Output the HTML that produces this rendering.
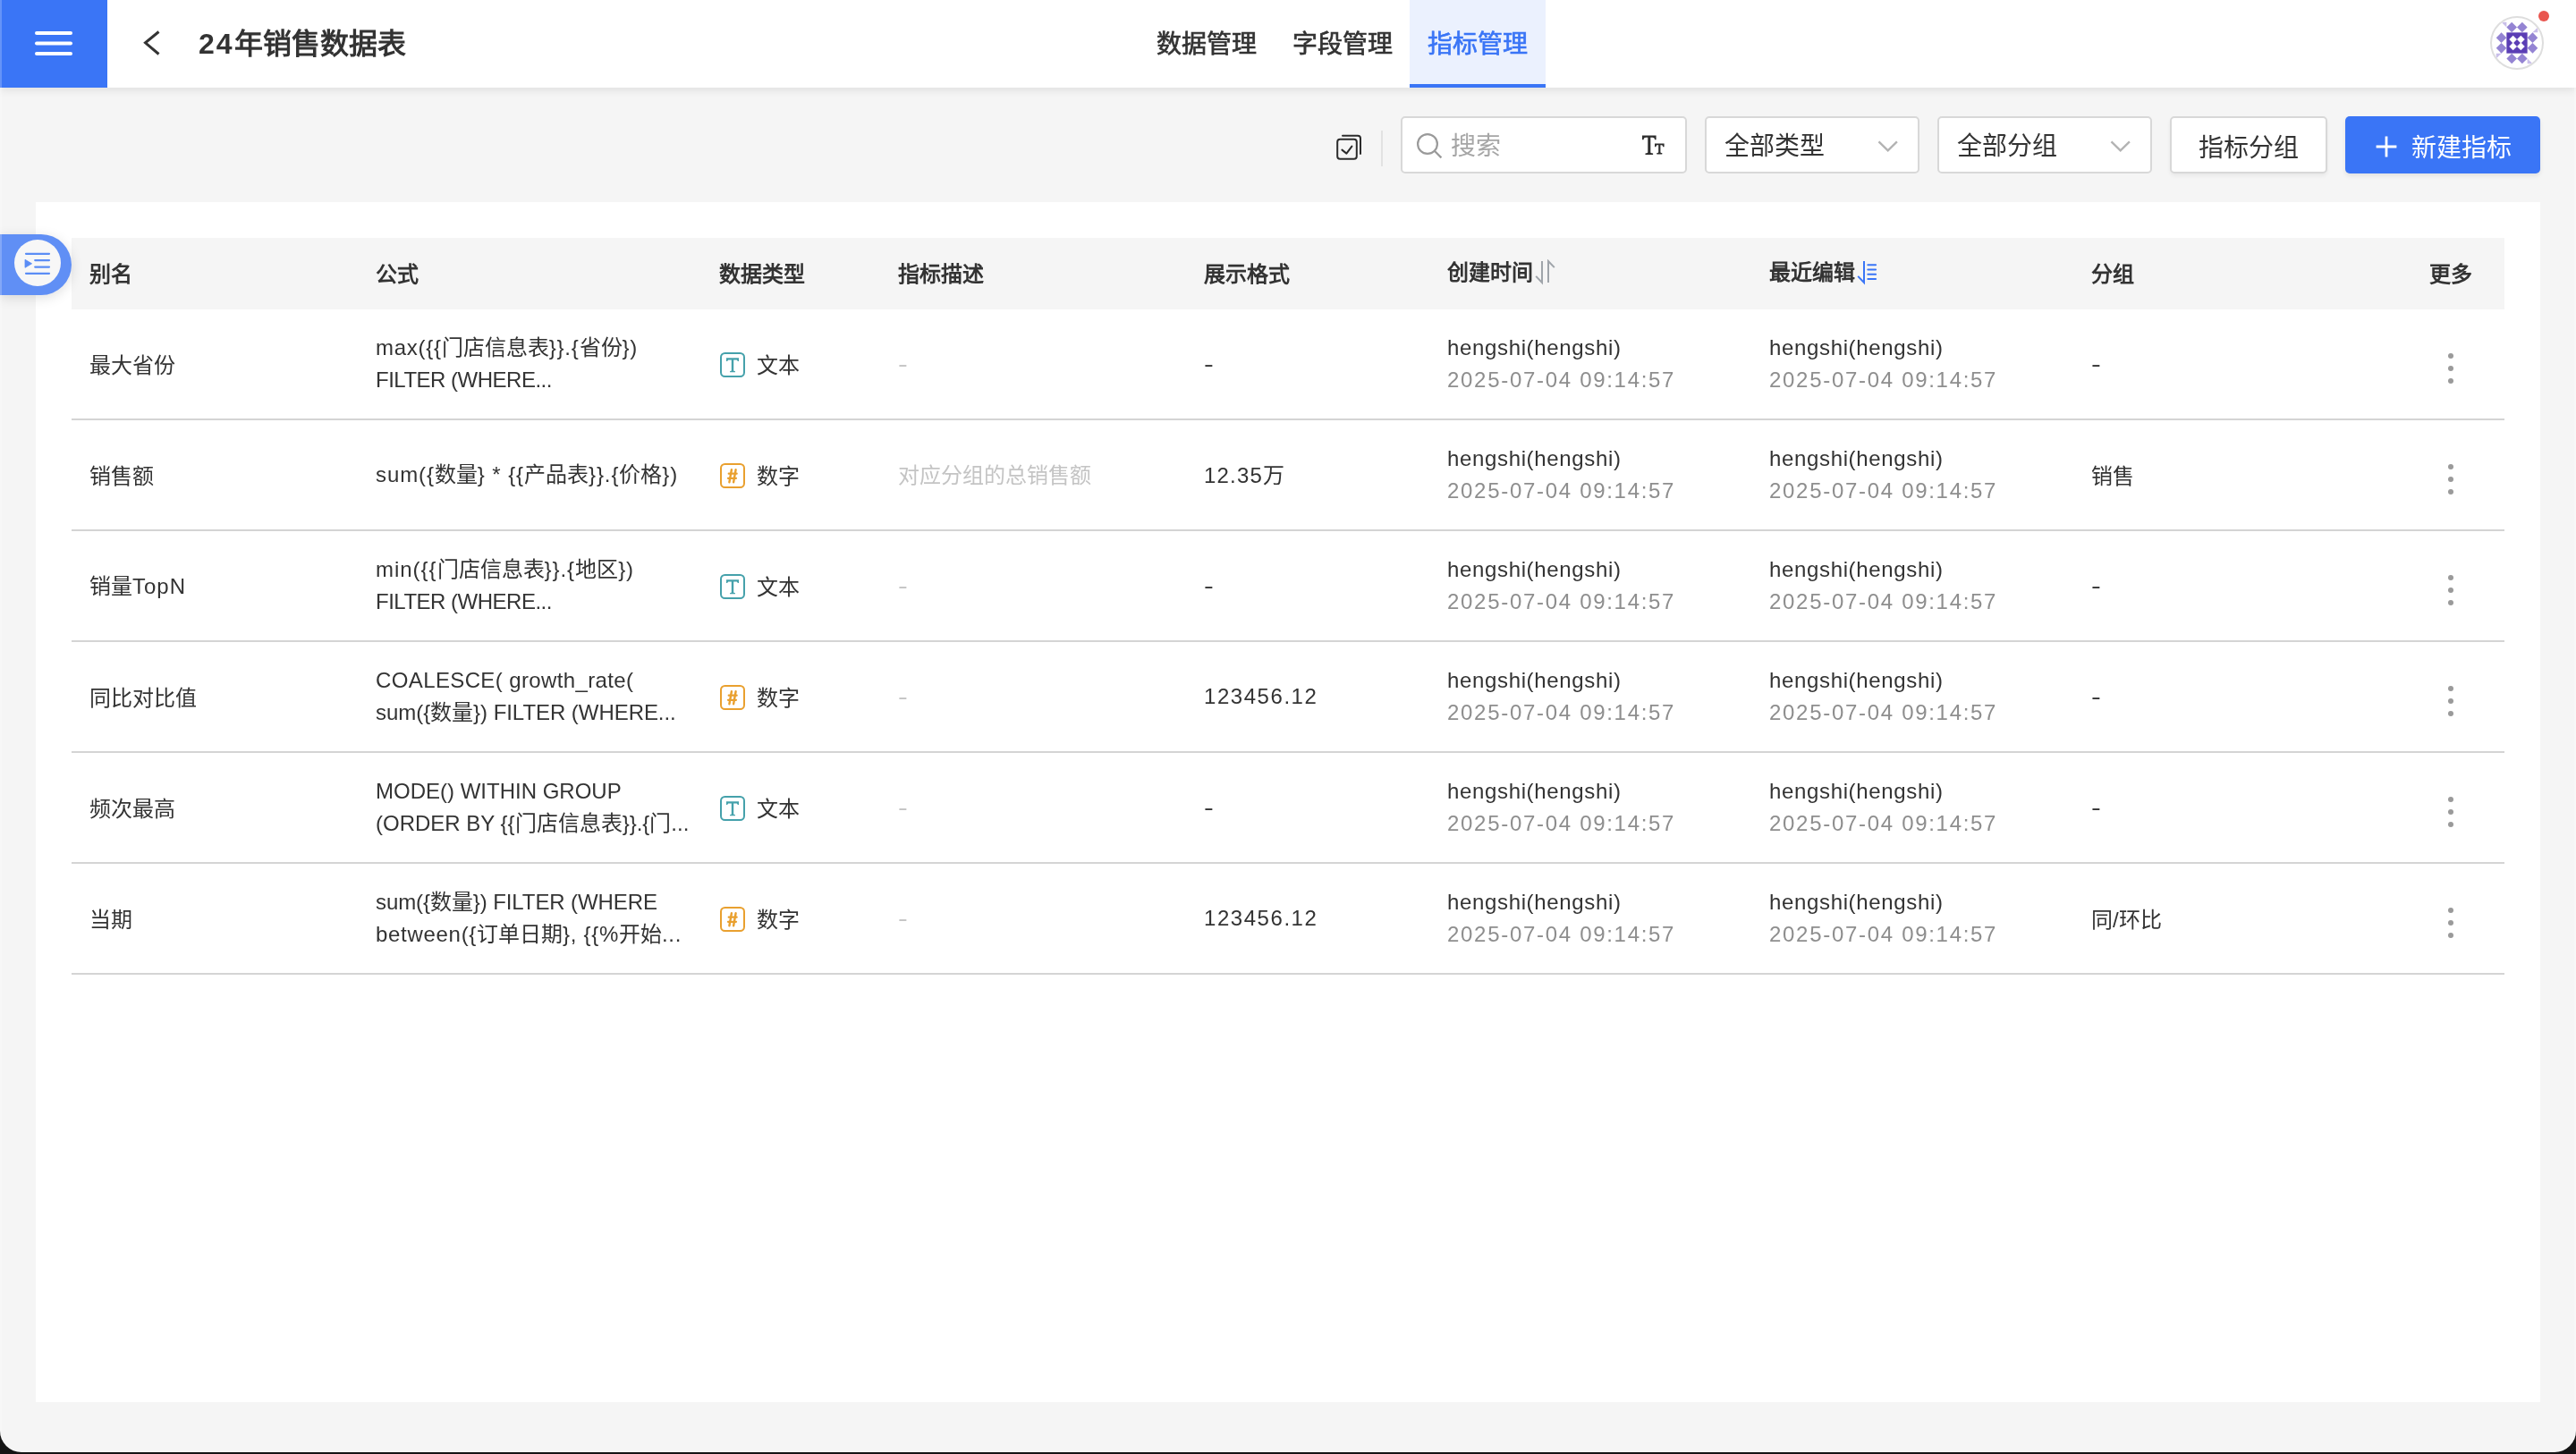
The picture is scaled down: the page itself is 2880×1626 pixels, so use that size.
<!DOCTYPE html>
<html lang="zh-CN">
<head>
<meta charset="utf-8">
<title>24年销售数据表 - 指标管理</title>
<style>
*{box-sizing:border-box;margin:0;padding:0}
html,body{width:2880px;height:1626px;overflow:hidden;background:#141414}
body{font-family:"Liberation Sans",sans-serif;color:#333;font-size:24px;position:relative}
#app{position:absolute;left:0;top:0;width:2880px;height:1624px;background:#f5f5f5;border-radius:0 0 24px 24px;overflow:hidden;will-change:transform}
.abs{position:absolute}
/* top bar */
#topbar{position:absolute;left:0;top:0;width:2880px;height:98px;background:#fff;box-shadow:0 2px 10px rgba(0,0,0,.10);z-index:5}
#menu{position:absolute;left:0;top:0;width:120px;height:98px;background:#3a75f6}
#title{position:absolute;left:222px;top:25px;height:48px;line-height:48px;font-size:32px;font-weight:700;color:#333;white-space:nowrap;letter-spacing:0}
.tab{position:absolute;top:0;height:98px;width:152px;text-align:center;line-height:100px;font-size:28px;font-weight:400;-webkit-text-stroke:.7px currentColor;color:#333;white-space:nowrap}
.tab.on{background:#ebf1fe;color:#3a75f6;box-shadow:inset 0 -4px 0 #3a75f6}
#avatar{position:absolute;left:2784px;top:18px;width:60px;height:60px;border-radius:50%;border:2px solid #dedede;background:#fff;overflow:hidden}
#dot{position:absolute;left:2838px;top:12px;width:12px;height:12px;border-radius:50%;background:#e9564f}
/* toolbar */
.box{position:absolute;top:130px;height:64px;background:#fff;border:2px solid #d8d8d8;border-radius:5px;font-size:28px;line-height:64px;white-space:nowrap}
#btn2{box-shadow:0 3px 4px rgba(0,0,0,.05);line-height:67px}
#btn1{position:absolute;left:2622px;top:130px;width:218px;height:64px;background:#3a75f6;border-radius:5px;color:#fff;font-size:28px;line-height:71px;white-space:nowrap;box-shadow:0 3px 5px rgba(0,0,0,.08)}
/* card & table */
#card{position:absolute;left:40px;top:226px;width:2800px;height:1342px;background:#fff}
#thead{position:absolute;left:80px;top:266px;width:2720px;height:80px;background:#f5f5f5;font-weight:700}
.th{position:absolute;top:0;height:80px;line-height:82px;white-space:nowrap;font-size:24px}
.row{position:absolute;left:80px;width:2720px;height:124px;border-bottom:2px solid #d4d4d4}
.c{position:absolute;white-space:nowrap;height:36px;line-height:36px;font-size:24px}
.g{color:#8e8e8e}
.lg{color:#c4c4c4}
.dots{position:absolute;left:2657px;top:49px;width:6px;height:34px}
.dots i{position:absolute;left:0;width:6px;height:6px;border-radius:50%;background:#9a9a9a}
.ti{position:absolute;left:725px;top:48px;width:28px;height:28px}
/* side tab */
#side{position:absolute;left:0;top:262px;width:80px;height:68px;background:#608ff5;border-radius:0 34px 34px 0;box-shadow:0 3px 14px rgba(0,0,0,.13);z-index:4}
#side .circ{position:absolute;left:16px;top:6px;width:52px;height:52px;border-radius:50%;background:#f7f7f7}
#edge{position:absolute;left:0;top:0;width:2px;height:1624px;background:rgba(255,255,255,.22);z-index:9}
.th.up{line-height:78px}
#edge2{position:absolute;right:0;top:0;width:2px;height:1624px;background:rgba(255,255,255,.3);z-index:9}

.us{letter-spacing:0.65px}
.dt{letter-spacing:1.7px}
.k{display:inline-block;width:1em;text-align:center;letter-spacing:0}
.hy{display:inline-block;transform:scaleX(1.35);transform-origin:0 50%}
</style>
</head>
<body>
<div id="app">
<div id="topbar">
 <div id="menu">
  <svg class="abs" style="left:0;top:0" width="120" height="98" viewBox="0 0 120 98"><g stroke="#fff" stroke-width="4" stroke-linecap="round"><line x1="41" y1="37" x2="79" y2="37"/><line x1="41" y1="48.5" x2="79" y2="48.5"/><line x1="41" y1="60" x2="79" y2="60"/></g></svg>
 </div>
 <svg class="abs" style="left:156px;top:30px" width="28" height="36" viewBox="0 0 28 36"><path d="M21.5 5.5 L6.5 17.8 L21.5 30.5" fill="none" stroke="#333" stroke-width="3" stroke-linejoin="miter"/></svg>
 <div id="title"><span style="letter-spacing:2px">24</span><span class="k">年</span><span class="k">销</span><span class="k">售</span><span class="k">数</span><span class="k">据</span><span class="k">表</span></div>
 <div class="tab" style="left:1273px"><span class="k">数</span><span class="k">据</span><span class="k">管</span><span class="k">理</span></div>
 <div class="tab" style="left:1425px"><span class="k">字</span><span class="k">段</span><span class="k">管</span><span class="k">理</span></div>
 <div class="tab on" style="left:1576px"><span class="k">指</span><span class="k">标</span><span class="k">管</span><span class="k">理</span></div>
 <div id="avatar">
  <svg class="abs" style="left:-2px;top:-2px" width="60" height="60" viewBox="2784 18 60 60"><g transform="translate(2814 48) scale(.97) translate(-2814 -48)">
   <g fill="#c9bfe9"><path d="M2796 24h6v6z"/><path d="M2838 30v6h-6z"/><path d="M2790 66v-6h6z"/><path d="M2832 72h-6v-6z"/></g>
   <g fill="#9484d3"><path d="M2808 24l6 6-6 6-6-6z"/><path d="M2820 24l6 6-6 6-6-6z"/><path d="M2808 60l6 6-6 6-6-6z"/><path d="M2820 60l6 6-6 6-6-6z"/><path d="M2796 36l6 6-6 6-6-6z"/><path d="M2796 48l6 6-6 6-6-6z"/><path d="M2832 36l6 6-6 6-6-6z"/><path d="M2832 48l6 6-6 6-6-6z"/></g>
   <rect x="2802" y="36" width="24" height="24" fill="#5b3eb5"/>
   <g fill="#fff"><path d="M2809.5 39.5l4.5 4.5-4.5 4.5-4.5-4.5z"/><path d="M2818.5 39.5l4.5 4.5-4.5 4.5-4.5-4.5z"/><path d="M2809.5 47.5l4.5 4.5-4.5 4.5-4.5-4.5z"/><path d="M2818.5 47.5l4.5 4.5-4.5 4.5-4.5-4.5z"/></g></g>
  </svg>
 </div>
 <div id="dot"></div>
</div>
<svg class="abs" style="left:1490px;top:148px" width="36" height="36" viewBox="1490 148 36 36"><g fill="none" stroke="#2b2b2b" stroke-width="2" stroke-linecap="round" stroke-linejoin="round"><rect x="1495.2" y="155.8" width="21.6" height="22" rx="3"/><path d="M1501 151.8h17a3 3 0 0 1 3 3v17.2"/><path d="M1500.4 167.6l5 4 6-8"/></g></svg>
<div class="abs" style="left:1544px;top:146px;width:2px;height:40px;background:#e2e2e2"></div>
<div class="box" id="search" style="left:1566px;width:320px">
 <svg class="abs" style="left:14px;top:14px" width="34" height="34" viewBox="1582 146 34 34"><g fill="none" stroke="#9a9a9a" stroke-width="2.2"><circle cx="1596" cy="161" r="10.9"/><path d="M1603.8 168.8l7.6 7.6" stroke-linecap="butt"/></g></svg>
 <span class="abs" style="left:54px;top:0;color:#a6a6a6" id="ph"><span class="k">搜</span><span class="k">索</span></span>
 <svg class="abs" style="left:266px;top:18px" width="30" height="26" viewBox="0 0 30 26"><g fill="#2e2e2e"><path d="M2 1.6h15.6v4.6h-1.6c-.2-1.6-.9-2.4-2.6-2.4h-2.1v16.2c0 1 .5 1.4 2.8 1.5v1.4h-8.6v-1.4c2.3-.1 2.8-.5 2.8-1.5v-16.2h-2.1c-1.7 0-2.4.8-2.6 2.4h-1.6z"/><path d="M16 10.4h10.600000000000001v3.8h-1.4c-.2-1.3-.7-1.9-2-1.9h-.8v7.6c0 .8.4 1.1 1.9 1.2v1.3h-6v-1.3c1.5-.1 1.9-.4 1.9-1.2v-7.6h-.8c-1.3 0-1.8.6-2 1.9h-1.4z"/></g></svg>
</div>
<div class="box" id="sel1" style="left:1906px;width:240px"><span class="abs" style="left:20px;top:0" id="s1t"><span class="k">全</span><span class="k">部</span><span class="k">类</span><span class="k">型</span></span>
 <svg class="abs" style="left:188px;top:22px" width="30" height="20" viewBox="0 0 30 20"><path d="M4.500 4.300l10.2 10 10.2-10" fill="none" stroke="#b3b3b3" stroke-width="2.4"/></svg></div>
<div class="box" id="sel2" style="left:2166px;width:240px"><span class="abs" style="left:20px;top:0" id="s2t"><span class="k">全</span><span class="k">部</span><span class="k">分</span><span class="k">组</span></span>
 <svg class="abs" style="left:188px;top:22px" width="30" height="20" viewBox="0 0 30 20"><path d="M4.500 4.300l10.2 10 10.2-10" fill="none" stroke="#b3b3b3" stroke-width="2.4"/></svg></div>
<div class="box" id="btn2" style="left:2426px;width:176px;text-align:center"><span id="b2t"><span class="k">指</span><span class="k">标</span><span class="k">分</span><span class="k">组</span></span></div>
<div id="btn1">
 <svg class="abs" style="left:32px;top:20px" width="28" height="28" viewBox="0 0 28 28"><path d="M14 2.600v22.8M2.600 14h22.8" stroke="#fff" stroke-width="2.8" fill="none"/></svg>
 <span class="abs" style="left:74px;top:0" id="b1t"><span class="k">新</span><span class="k">建</span><span class="k">指</span><span class="k">标</span></span>
</div>
<div id="card"></div>
<div id="thead"><div class="th" id="h0" style="left:20px"><span class="k">别</span><span class="k">名</span></div><div class="th" id="h1" style="left:340px"><span class="k">公</span><span class="k">式</span></div><div class="th" id="h2" style="left:724px"><span class="k">数</span><span class="k">据</span><span class="k">类</span><span class="k">型</span></div><div class="th" id="h3" style="left:924px"><span class="k">指</span><span class="k">标</span><span class="k">描</span><span class="k">述</span></div><div class="th" id="h4" style="left:1266px"><span class="k">展</span><span class="k">示</span><span class="k">格</span><span class="k">式</span></div><div class="th up" id="h5" style="left:1538px"><span class="k">创</span><span class="k">建</span><span class="k">时</span><span class="k">间</span></div><div class="th up" id="h6" style="left:1898px"><span class="k">最</span><span class="k">近</span><span class="k">编</span><span class="k">辑</span></div><div class="th" id="h7" style="left:2258px"><span class="k">分</span><span class="k">组</span></div><div class="th" id="h8" style="left:2600px;width:120px;text-align:center"><span class="k">更</span><span class="k">多</span></div><svg class="abs" style="left:1634px;top:24px" width="28" height="30" viewBox="1714 290 28 30"><g fill="none" stroke="#9fa4aa" stroke-width="2"><path d="M1724 292v24l-6.800-7.100"/><path d="M1731 316v-24l6.800 7.100"/></g></svg><svg class="abs" style="left:1994px;top:24px" width="28" height="30" viewBox="2074 290 28 30"><g fill="none" stroke="#3a75f6" stroke-width="2"><path d="M2084 292v24l-6.800-7.100"/><path d="M2088.300 296.300h8.800M2088.300 301.500h8.800M2088.300 306.800h8.800M2088.300 312.100h8.800" stroke-linecap="round"/></g></svg></div>
<div class="row" style="top:346px"><div class="c" id="a0" style="left:20px;top:45px"><span class="k">最</span><span class="k">大</span><span class="k">省</span><span class="k">份</span></div><div class="c" id="f0a" style="left:340px;top:25px"><span style="letter-spacing:0.74px">max({{</span><span class="k">门</span><span class="k">店</span><span class="k">信</span><span class="k">息</span><span class="k">表</span><span style="letter-spacing:0.74px">}}.{</span><span class="k">省</span><span class="k">份</span><span style="letter-spacing:0.74px">})</span></div><div class="c" id="f0b" style="left:340px;top:61px"><span style="letter-spacing:-0.5px">FILTER (WHERE...</span></div><svg class="ti" viewBox="0 0 28 28"><rect x="1" y="1" width="26" height="26" rx="4.5" fill="none" stroke="#45a1ab" stroke-width="2"/><path d="M7 6.300h14v3.800h-1.300c-.2-1-.6-1.500-1.600-1.500h-2.900v11.500c0 .6.400 .9 1.700 1v1.200h-5.800v-1.200c1.300-.1 1.700-.4 1.700-1v-11.500h-2.900c-1 0-1.400.5-1.600 1.500h-1.300z" fill="#45a1ab"/></svg><div class="c" id="t0" style="left:766px;top:45px"><span class="k">文</span><span class="k">本</span></div><div class="c lg" id="d0" style="left:924px;top:43px"><span class="hy">-</span></div><div class="c" id="m0" style="left:1266px;top:43px"><span class="hy">-</span></div><div class="c us" id="u0" style="left:1538px;top:25px">hengshi(hengshi)</div><div class="c g dt" id="v0" style="left:1538px;top:61px">2025-07-04 09:14:57</div><div class="c us" id="w0" style="left:1898px;top:25px">hengshi(hengshi)</div><div class="c g dt" id="x0" style="left:1898px;top:61px">2025-07-04 09:14:57</div><div class="c" id="g0" style="left:2258px;top:43px"><span class="hy">-</span></div><div class="dots"><i style="top:0"></i><i style="top:14px"></i><i style="top:28px"></i></div></div>
<div class="row" style="top:470px"><div class="c" id="a1" style="left:20px;top:45px"><span class="k">销</span><span class="k">售</span><span class="k">额</span></div><div class="c" id="f1a" style="left:340px;top:43px"><span style="letter-spacing:0.9px">sum({</span><span class="k">数</span><span class="k">量</span><span style="letter-spacing:0.9px">} * {{</span><span class="k">产</span><span class="k">品</span><span class="k">表</span><span style="letter-spacing:0.9px">}}.{</span><span class="k">价</span><span class="k">格</span><span style="letter-spacing:0.9px">})</span></div><svg class="ti" viewBox="0 0 28 28"><rect x="1" y="1" width="26" height="26" rx="4.5" fill="none" stroke="#e9a02f" stroke-width="2"/><g stroke="#e9a02f" stroke-width="2.400" fill="none" stroke-linecap="round"><path d="M12.900 7.200l-2.500 14M17.600 7.200l-2.500 14"/><path d="M9.700 11.700h9M9 16.800h9" stroke-width="2.200"/></g></svg><div class="c" id="t1" style="left:766px;top:45px"><span class="k">数</span><span class="k">字</span></div><div class="c lg" id="d1" style="left:924px;top:44px"><span class="k">对</span><span class="k">应</span><span class="k">分</span><span class="k">组</span><span class="k">的</span><span class="k">总</span><span class="k">销</span><span class="k">售</span><span class="k">额</span></div><div class="c" id="m1" style="left:1266px;top:44px"><span style="letter-spacing:1.2px">12.35</span><span class="k">万</span></div><div class="c us" id="u1" style="left:1538px;top:25px">hengshi(hengshi)</div><div class="c g dt" id="v1" style="left:1538px;top:61px">2025-07-04 09:14:57</div><div class="c us" id="w1" style="left:1898px;top:25px">hengshi(hengshi)</div><div class="c g dt" id="x1" style="left:1898px;top:61px">2025-07-04 09:14:57</div><div class="c" id="g1" style="left:2258px;top:45px"><span class="k">销</span><span class="k">售</span></div><div class="dots"><i style="top:0"></i><i style="top:14px"></i><i style="top:28px"></i></div></div>
<div class="row" style="top:594px"><div class="c" id="a2" style="left:20px;top:44px"><span class="k">销</span><span class="k">量</span><span style="letter-spacing:1.0px">TopN</span></div><div class="c" id="f2a" style="left:340px;top:25px"><span style="letter-spacing:0.97px">min({{</span><span class="k">门</span><span class="k">店</span><span class="k">信</span><span class="k">息</span><span class="k">表</span><span style="letter-spacing:0.97px">}}.{</span><span class="k">地</span><span class="k">区</span><span style="letter-spacing:0.97px">})</span></div><div class="c" id="f2b" style="left:340px;top:61px"><span style="letter-spacing:-0.5px">FILTER (WHERE...</span></div><svg class="ti" viewBox="0 0 28 28"><rect x="1" y="1" width="26" height="26" rx="4.5" fill="none" stroke="#45a1ab" stroke-width="2"/><path d="M7 6.300h14v3.800h-1.300c-.2-1-.6-1.500-1.600-1.500h-2.900v11.500c0 .6.400 .9 1.700 1v1.200h-5.800v-1.200c1.300-.1 1.700-.4 1.700-1v-11.500h-2.900c-1 0-1.400.5-1.600 1.500h-1.300z" fill="#45a1ab"/></svg><div class="c" id="t2" style="left:766px;top:45px"><span class="k">文</span><span class="k">本</span></div><div class="c lg" id="d2" style="left:924px;top:43px"><span class="hy">-</span></div><div class="c" id="m2" style="left:1266px;top:43px"><span class="hy">-</span></div><div class="c us" id="u2" style="left:1538px;top:25px">hengshi(hengshi)</div><div class="c g dt" id="v2" style="left:1538px;top:61px">2025-07-04 09:14:57</div><div class="c us" id="w2" style="left:1898px;top:25px">hengshi(hengshi)</div><div class="c g dt" id="x2" style="left:1898px;top:61px">2025-07-04 09:14:57</div><div class="c" id="g2" style="left:2258px;top:43px"><span class="hy">-</span></div><div class="dots"><i style="top:0"></i><i style="top:14px"></i><i style="top:28px"></i></div></div>
<div class="row" style="top:718px"><div class="c" id="a3" style="left:20px;top:45px"><span class="k">同</span><span class="k">比</span><span class="k">对</span><span class="k">比</span><span class="k">值</span></div><div class="c" id="f3a" style="left:340px;top:25px"><span style="letter-spacing:0.38px">COALESCE( growth_rate(</span></div><div class="c" id="f3b" style="left:340px;top:61px"><span style="letter-spacing:-0.05px">sum({</span><span class="k">数</span><span class="k">量</span><span style="letter-spacing:-0.05px">}) FILTER (WHERE...</span></div><svg class="ti" viewBox="0 0 28 28"><rect x="1" y="1" width="26" height="26" rx="4.5" fill="none" stroke="#e9a02f" stroke-width="2"/><g stroke="#e9a02f" stroke-width="2.400" fill="none" stroke-linecap="round"><path d="M12.900 7.200l-2.500 14M17.600 7.200l-2.500 14"/><path d="M9.700 11.700h9M9 16.800h9" stroke-width="2.200"/></g></svg><div class="c" id="t3" style="left:766px;top:45px"><span class="k">数</span><span class="k">字</span></div><div class="c lg" id="d3" style="left:924px;top:43px"><span class="hy">-</span></div><div class="c" id="m3" style="left:1266px;top:43px"><span style="letter-spacing:1.55px">123456.12</span></div><div class="c us" id="u3" style="left:1538px;top:25px">hengshi(hengshi)</div><div class="c g dt" id="v3" style="left:1538px;top:61px">2025-07-04 09:14:57</div><div class="c us" id="w3" style="left:1898px;top:25px">hengshi(hengshi)</div><div class="c g dt" id="x3" style="left:1898px;top:61px">2025-07-04 09:14:57</div><div class="c" id="g3" style="left:2258px;top:43px"><span class="hy">-</span></div><div class="dots"><i style="top:0"></i><i style="top:14px"></i><i style="top:28px"></i></div></div>
<div class="row" style="top:842px"><div class="c" id="a4" style="left:20px;top:45px"><span class="k">频</span><span class="k">次</span><span class="k">最</span><span class="k">高</span></div><div class="c" id="f4a" style="left:340px;top:25px">MODE() WITHIN GROUP</div><div class="c" id="f4b" style="left:340px;top:61px">(ORDER BY {{<span class="k">门</span><span class="k">店</span><span class="k">信</span><span class="k">息</span><span class="k">表</span>}}.{<span class="k">门</span>...</div><svg class="ti" viewBox="0 0 28 28"><rect x="1" y="1" width="26" height="26" rx="4.5" fill="none" stroke="#45a1ab" stroke-width="2"/><path d="M7 6.300h14v3.800h-1.300c-.2-1-.6-1.500-1.600-1.500h-2.900v11.500c0 .6.400 .9 1.700 1v1.200h-5.800v-1.200c1.300-.1 1.700-.4 1.700-1v-11.500h-2.900c-1 0-1.400.5-1.600 1.500h-1.300z" fill="#45a1ab"/></svg><div class="c" id="t4" style="left:766px;top:45px"><span class="k">文</span><span class="k">本</span></div><div class="c lg" id="d4" style="left:924px;top:43px"><span class="hy">-</span></div><div class="c" id="m4" style="left:1266px;top:43px"><span class="hy">-</span></div><div class="c us" id="u4" style="left:1538px;top:25px">hengshi(hengshi)</div><div class="c g dt" id="v4" style="left:1538px;top:61px">2025-07-04 09:14:57</div><div class="c us" id="w4" style="left:1898px;top:25px">hengshi(hengshi)</div><div class="c g dt" id="x4" style="left:1898px;top:61px">2025-07-04 09:14:57</div><div class="c" id="g4" style="left:2258px;top:43px"><span class="hy">-</span></div><div class="dots"><i style="top:0"></i><i style="top:14px"></i><i style="top:28px"></i></div></div>
<div class="row" style="top:966px"><div class="c" id="a5" style="left:20px;top:45px"><span class="k">当</span><span class="k">期</span></div><div class="c" id="f5a" style="left:340px;top:25px"><span style="letter-spacing:-0.1px">sum({</span><span class="k">数</span><span class="k">量</span><span style="letter-spacing:-0.1px">}) FILTER (WHERE</span></div><div class="c" id="f5b" style="left:340px;top:61px"><span style="letter-spacing:0.7px">between({</span><span class="k">订</span><span class="k">单</span><span class="k">日</span><span class="k">期</span><span style="letter-spacing:0.7px">}, {{%</span><span class="k">开</span><span class="k">始</span><span style="letter-spacing:0.7px">...</span></div><svg class="ti" viewBox="0 0 28 28"><rect x="1" y="1" width="26" height="26" rx="4.5" fill="none" stroke="#e9a02f" stroke-width="2"/><g stroke="#e9a02f" stroke-width="2.400" fill="none" stroke-linecap="round"><path d="M12.900 7.200l-2.500 14M17.600 7.200l-2.500 14"/><path d="M9.700 11.700h9M9 16.800h9" stroke-width="2.200"/></g></svg><div class="c" id="t5" style="left:766px;top:45px"><span class="k">数</span><span class="k">字</span></div><div class="c lg" id="d5" style="left:924px;top:43px"><span class="hy">-</span></div><div class="c" id="m5" style="left:1266px;top:43px"><span style="letter-spacing:1.55px">123456.12</span></div><div class="c us" id="u5" style="left:1538px;top:25px">hengshi(hengshi)</div><div class="c g dt" id="v5" style="left:1538px;top:61px">2025-07-04 09:14:57</div><div class="c us" id="w5" style="left:1898px;top:25px">hengshi(hengshi)</div><div class="c g dt" id="x5" style="left:1898px;top:61px">2025-07-04 09:14:57</div><div class="c" id="g5" style="left:2258px;top:45px"><span class="k">同</span>/<span class="k">环</span><span class="k">比</span></div><div class="dots"><i style="top:0"></i><i style="top:14px"></i><i style="top:28px"></i></div></div>
<div id="side"><div class="circ"></div>
 <svg class="abs" style="left:24px;top:16px" width="36" height="32" viewBox="24 278 36 32"><g stroke="#5b8df5" stroke-width="2.200" stroke-linecap="round" fill="none"><path d="M29 283.800h26M39.200 291.100h15.800M39.200 298.600h15.800M29 305.800h26"/></g><path d="M28 290.300v9l7.600-4.500z" fill="#5b8df5" stroke="#5b8df5" stroke-width="0.800" stroke-linejoin="round"/></svg>
</div>
<div id="edge"></div><div id="edge2"></div>
</div>
</body>
</html>
